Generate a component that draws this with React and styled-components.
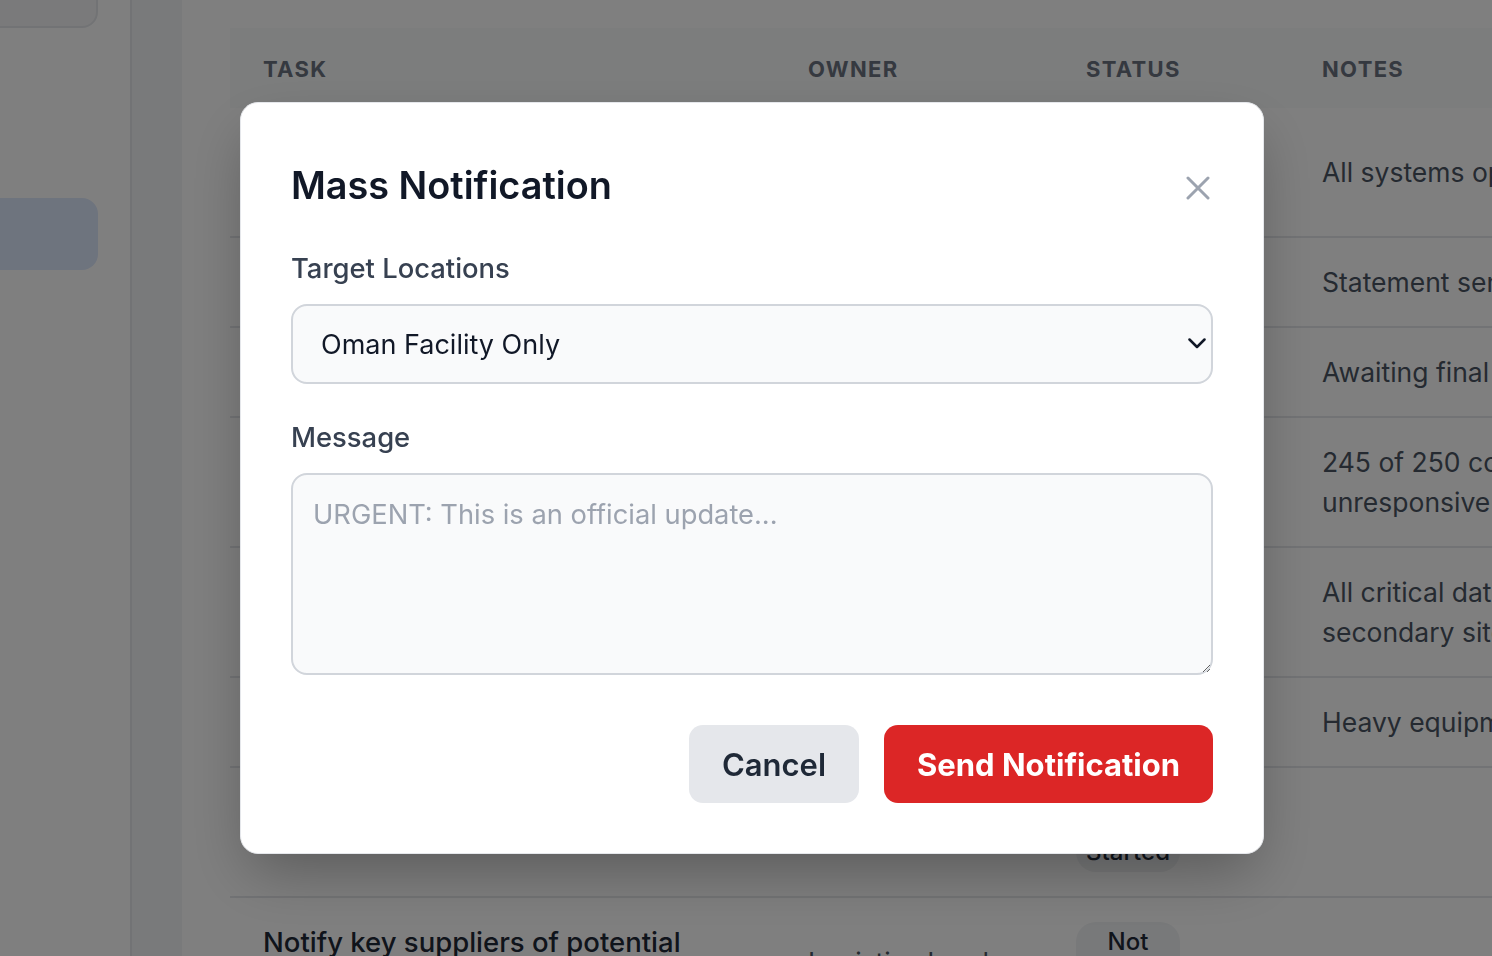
import React from "react";
import styled, { createGlobalStyle } from "styled-components";

const GlobalStyle = createGlobalStyle`
  * { box-sizing: border-box; }
  body {
    margin: 0;
    font-family: Inter, "Noto Sans", "Liberation Sans", sans-serif;
    overflow: hidden;
    background: #fff;
  }
`;

const tasks = [
  {
    task: "Activate emergency operations center and command staff",
    owner: "Ops Director",
    status: "Completed",
    notes: ["All systems operational"],
  },
  {
    task: "Issue initial public statement",
    owner: "PR Lead",
    status: "Completed",
    notes: ["Statement sent to media"],
  },
  {
    task: "Contact insurance provider",
    owner: "Finance Lead",
    status: "Pending",
    notes: ["Awaiting final approval"],
  },
  {
    task: "Account for all staff members",
    owner: "HR Manager",
    status: "In Progress",
    notes: ["245 of 250 confirmed safe, 5", "unresponsive"],
  },
  {
    task: "Back up and relocate critical data",
    owner: "IT Manager",
    status: "Completed",
    notes: ["All critical data replicated to", "secondary site"],
  },
  {
    task: "Secure physical assets",
    owner: "Facilities",
    status: "Pending",
    notes: ["Heavy equipment relocated"],
  },
  {
    task: "Brief local emergency services",
    owner: "Safety Officer",
    status: "Not Started",
    notes: [],
  },
  {
    task: "Notify key suppliers of potential disruptions",
    owner: "Logistics Lead",
    status: "Not Started",
    notes: [],
  },
];

const Page = styled.div`
  display: flex;
  width: 100vw;
  height: 100vh;
  overflow: hidden;
`;

const Sidebar = styled.aside`
  width: 132px;
  flex-shrink: 0;
  border-right: 2px solid #e5e7eb;
  background: #fff;
  display: flex;
  flex-direction: column;
  overflow: hidden;
`;

const NavCard = styled.div`
  margin: -30px 0 0 -40px;
  width: 138px;
  height: 58px;
  border: 2px solid #e5e7eb;
  border-radius: 16px;
  background: #f5f5f6;
`;

const NavItem = styled.div`
  margin: 170px 0 0 -40px;
  width: 138px;
  height: 72px;
  border-radius: 16px;
  background: ${(p) => (p.active ? "#dde8fd" : "transparent")};
`;

const Main = styled.main`
  flex: 1;
  display: flex;
  background: #f3f4f6;
  padding-left: 50px;
  min-width: 0;
`;

const Content = styled.div`
  flex: 1;
  background: #fff;
  padding: 28px 0 0 48px;
  overflow: hidden;
`;

const Table = styled.div`
  width: 1600px;
  display: flex;
  flex-direction: column;
`;

const Row = styled.div`
  display: grid;
  grid-template-columns: 545px 278px 236px 541px;
  align-items: center;
  border-bottom: 2px solid ${(p) => (p.head ? "#f9fafb" : "#e5e7eb")};
  background: ${(p) => (p.head ? "#f9fafb" : "#fff")};
  padding: ${(p) => (p.head ? "25px 0 21px" : "24px 0")};
`;

const HeadCell = styled.div`
  padding: 0 33px;
  font-size: 22px;
  line-height: 32px;
  font-weight: 700;
  letter-spacing: 0.06em;
  text-transform: uppercase;
  color: #6b7280;
`;

const Cell = styled.div`
  padding: 0 33px;
  font-size: ${(p) => (p.strong ? "27.5px" : "26.5px")};
  font-weight: ${(p) => (p.strong ? 500 : 400)};
  line-height: 40px;
  color: ${(p) => (p.strong ? "#1f2937" : "#4b5563")};
  white-space: ${(p) => (p.nowrap ? "nowrap" : "normal")};
`;

const StatusCell = styled.div`
  padding: 0 33px 0 23px;
  display: flex;
`;

const NoteLine = styled.div``;

const Pill = styled.span`
  display: block;
  width: min-content;
  padding: 0 10px;
  border-radius: 20px;
  background: #f1f2f4;
  color: #1f2937;
  font-size: 24px;
  line-height: 40px;
  font-weight: 500;
  text-align: center;
`;

const Overlay = styled.div`
  position: fixed;
  inset: 0;
  background: rgba(0, 0, 0, 0.5);
  display: flex;
  align-items: center;
  justify-content: center;
  padding-left: 12px;
`;

const Modal = styled.div`
  width: 1024px;
  background: #fff;
  border: 1px solid #e5e7eb;
  border-radius: 18px;
  padding: 50px;
  box-shadow: 0 25px 60px -10px rgba(0, 0, 0, 0.3);
  display: flex;
  flex-direction: column;
`;

const ModalHeader = styled.div`
  display: flex;
  align-items: center;
  justify-content: space-between;
  height: 64px;
  margin-bottom: 33px;
`;

const Title = styled.h2`
  margin: 0;
  font-size: 37.8px;
  font-weight: 600;
  color: #111827;
`;

const CloseButton = styled.button`
  border: none;
  background: none;
  padding: 0;
  margin-right: 3px;
  margin-top: 6px;
  display: flex;
  cursor: pointer;
`;

const Label = styled.label`
  display: block;
  font-size: 27.4px;
  line-height: 36px;
  font-weight: 500;
  color: #374151;
  margin-bottom: 18px;
`;

const Field = styled.div`
  position: relative;
  margin-bottom: ${(p) => p.gap || 0}px;
`;

const Select = styled.select`
  width: 100%;
  height: 80px;
  appearance: none;
  border: 2px solid #d1d5db;
  border-radius: 16px;
  background: #f9fafb;
  padding: 0 28px;
  font-family: inherit;
  font-size: 27px;
  color: #111827;
  outline: none;
`;

const Chevron = styled.svg`
  position: absolute;
  right: 7px;
  top: 34px;
  pointer-events: none;
`;

const TextArea = styled.textarea`
  display: block;
  width: 100%;
  height: 202px;
  border: 2px solid #d1d5db;
  border-radius: 16px;
  background: #f9fafb;
  padding: 20px;
  font-family: inherit;
  font-size: 27.3px;
  line-height: 40px;
  color: #111827;
  outline: none;
  &::placeholder {
    color: #9ca3af;
  }
`;

const Actions = styled.div`
  display: flex;
  justify-content: flex-end;
  gap: 25px;
  margin-top: 50px;
`;

const Button = styled.button`
  height: 78px;
  padding: 0 33px;
  border: none;
  border-radius: 14px;
  font-family: inherit;
  font-size: 31px;
  font-weight: ${(p) => (p.primary ? 700 : 600)};
  background: ${(p) => (p.primary ? "#dc2626" : "#e5e7eb")};
  color: ${(p) => (p.primary ? "#fff" : "#1f2937")};
  cursor: pointer;
`;

export default function App() {
  return (
    <>
      <GlobalStyle />
      <Page>
        <Sidebar>
          <NavCard />
          <NavItem active />
        </Sidebar>
        <Main>
          <Content>
            <Table>
              <Row head>
                <HeadCell>Task</HeadCell>
                <HeadCell>Owner</HeadCell>
                <HeadCell>Status</HeadCell>
                <HeadCell>Notes</HeadCell>
              </Row>
              {tasks.map((t) => (
                <Row key={t.task}>
                  <Cell strong>{t.task}</Cell>
                  <Cell>{t.owner}</Cell>
                  <StatusCell>
                    <Pill>{t.status}</Pill>
                  </StatusCell>
                  <Cell nowrap>
                    {t.notes.map((line) => (
                      <NoteLine key={line}>{line}</NoteLine>
                    ))}
                  </Cell>
                </Row>
              ))}
            </Table>
          </Content>
        </Main>
      </Page>

      <Overlay>
        <Modal>
          <ModalHeader>
            <Title>Mass Notification</Title>
            <CloseButton aria-label="Close">
              <svg width="24" height="24" viewBox="0 0 24 24" fill="none">
                <path
                  d="M2 2 22 22M22 2 2 22"
                  stroke="#9ca3af"
                  strokeWidth="3"
                  strokeLinecap="round"
                />
              </svg>
            </CloseButton>
          </ModalHeader>

          <Label>Target Locations</Label>
          <Field gap={35}>
            <Select defaultValue="oman">
              <option value="all">All Locations</option>
              <option value="oman">Oman Facility Only</option>
            </Select>
            <Chevron width="18" height="11" viewBox="0 0 18 11" fill="none">
              <path
                d="M1.5 1.5 9 9l7.5-7.5"
                stroke="#111827"
                strokeWidth="2.5"
                strokeLinecap="round"
                strokeLinejoin="round"
              />
            </Chevron>
          </Field>

          <Label>Message</Label>
          <Field>
            <TextArea placeholder="URGENT: This is an official update..." />
          </Field>

          <Actions>
            <Button>Cancel</Button>
            <Button primary>Send Notification</Button>
          </Actions>
        </Modal>
      </Overlay>
    </>
  );
}
